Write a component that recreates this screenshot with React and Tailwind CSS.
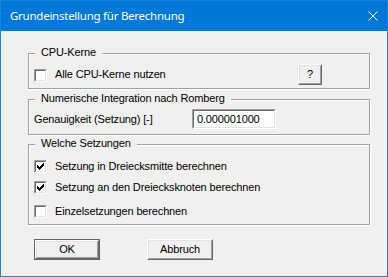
import React from 'react';

function Check() {
  return (
    <svg width="7" height="7" viewBox="0 0 7 7" shapeRendering="crispEdges" className="block">
      <path d="M6 0h1v1H6zM5 1h2v1H5zM0 2h1v1H0zM4 2h3v1H4zM0 3h2v1H0zM3 3h3v1H3zM0 4h5v1H0zM1 5h3v1H1zM2 6h1v1H2z" fill="#000" />
    </svg>
  );
}

function CheckBox({ checked }) {
  return (
    <div className="w-[13px] h-[13px] shrink-0 border border-t-[#a0a0a0] border-l-[#a0a0a0] border-b-white border-r-white">
      <div className="w-full h-full border border-t-[#696969] border-l-[#696969] border-b-[#e3e3e3] border-r-[#e3e3e3] bg-white flex items-center justify-center">
        {checked && <Check />}
      </div>
    </div>
  );
}

function Button({ children, isDefault, className = '' }) {
  const inner = (
    <div className="w-full h-full border border-t-white border-l-white border-b-[#696969] border-r-[#696969]">
      <div className="w-full h-full border border-t-[#e3e3e3] border-l-[#e3e3e3] border-b-[#a0a0a0] border-r-[#a0a0a0] flex items-center justify-center bg-[#f0f0f0]">
        {children}
      </div>
    </div>
  );
  if (isDefault) {
    return <div className={`border border-[#646464] ${className}`}>{inner}</div>;
  }
  return <div className={className}>{inner}</div>;
}

function Group({ title, className = '', children }) {
  return (
    <div className={`relative w-[342px] border border-[#a0a0a0] shadow-[1px_1px_0_#fff,inset_1px_1px_0_#fff] ${className}`}>
      <span className="absolute left-[6px] top-[-8px] px-[6px] bg-[#f0f0f0] leading-[13px]">{title}</span>
      {children}
    </div>
  );
}

function Row({ checked, label, className = '' }) {
  return (
    <div className={`flex items-center gap-[8px] pl-[5px] ${className}`}>
      <CheckBox checked={checked} />
      <span className="leading-[13px]">{label}</span>
    </div>
  );
}

export default function App() {
  return (
    <div className="w-[388px] h-[277px] border border-[#1883d7] bg-[#f0f0f0] flex flex-col font-['Liberation_Sans',Arial,sans-serif] text-[11px] text-black tracking-[-0.15px]">
      {/* Title bar */}
      <div className="h-[30px] shrink-0 bg-[#0078d7] flex items-center justify-between pl-[9px] pr-[9px] text-white">
        <span className="font-['Noto_Sans',sans-serif] text-[11.5px] tracking-[-0.25px]">Grundeinstellung für Berechnung</span>
        <svg width="10" height="10" viewBox="0 0 10 10" className="block">
          <path d="M0.5 0.5L9.5 9.5M9.5 0.5L0.5 9.5" stroke="#fff" strokeWidth="1" />
        </svg>
      </div>

      {/* Body */}
      <div className="flex flex-col pl-[27px] pt-[22px]">
        <Group title="CPU-Kerne" className="h-[36px]">
          <div className="flex items-center pt-[10px] pl-[5px]">
            <div className="mt-[2px]"><CheckBox /></div>
            <span className="ml-[8px] leading-[13px]">Alle CPU-Kerne nutzen</span>
            <Button className="ml-auto mr-[47px] w-[24px] h-[21px]">?</Button>
          </div>
        </Group>

        <Group title="Numerische Integration nach Romberg" className="h-[36px] mt-[10px]">
          <div className="flex items-center pt-[9px] pl-[5px]">
            <span className="w-[158px] shrink-0 leading-[13px]">Genauigkeit (Setzung) [-]</span>
            <div className="w-[84px] h-[20px] border border-t-[#a0a0a0] border-l-[#a0a0a0] border-b-white border-r-white">
              <div className="w-full h-full border border-t-[#696969] border-l-[#696969] border-b-[#e3e3e3] border-r-[#e3e3e3] bg-white flex items-center pl-[3px]">
                0.000001000
              </div>
            </div>
          </div>
        </Group>

        <Group title="Welche Setzungen" className="h-[81px] mt-[9px]">
          <Row checked label="Setzung in Dreiecksmitte berechnen" className="mt-[15px]" />
          <Row checked label="Setzung an den Dreiecksknoten berechnen" className="mt-[8px]" />
          <Row label="Einzelsetzungen berechnen" className="mt-[11px]" />
        </Group>

        <div className="flex mt-[14px] pl-[6px]">
          <Button isDefault className="w-[66px] h-[21px]">OK</Button>
          <Button className="w-[66px] h-[21px] ml-[47px]">Abbruch</Button>
        </div>
      </div>
    </div>
  );
}
